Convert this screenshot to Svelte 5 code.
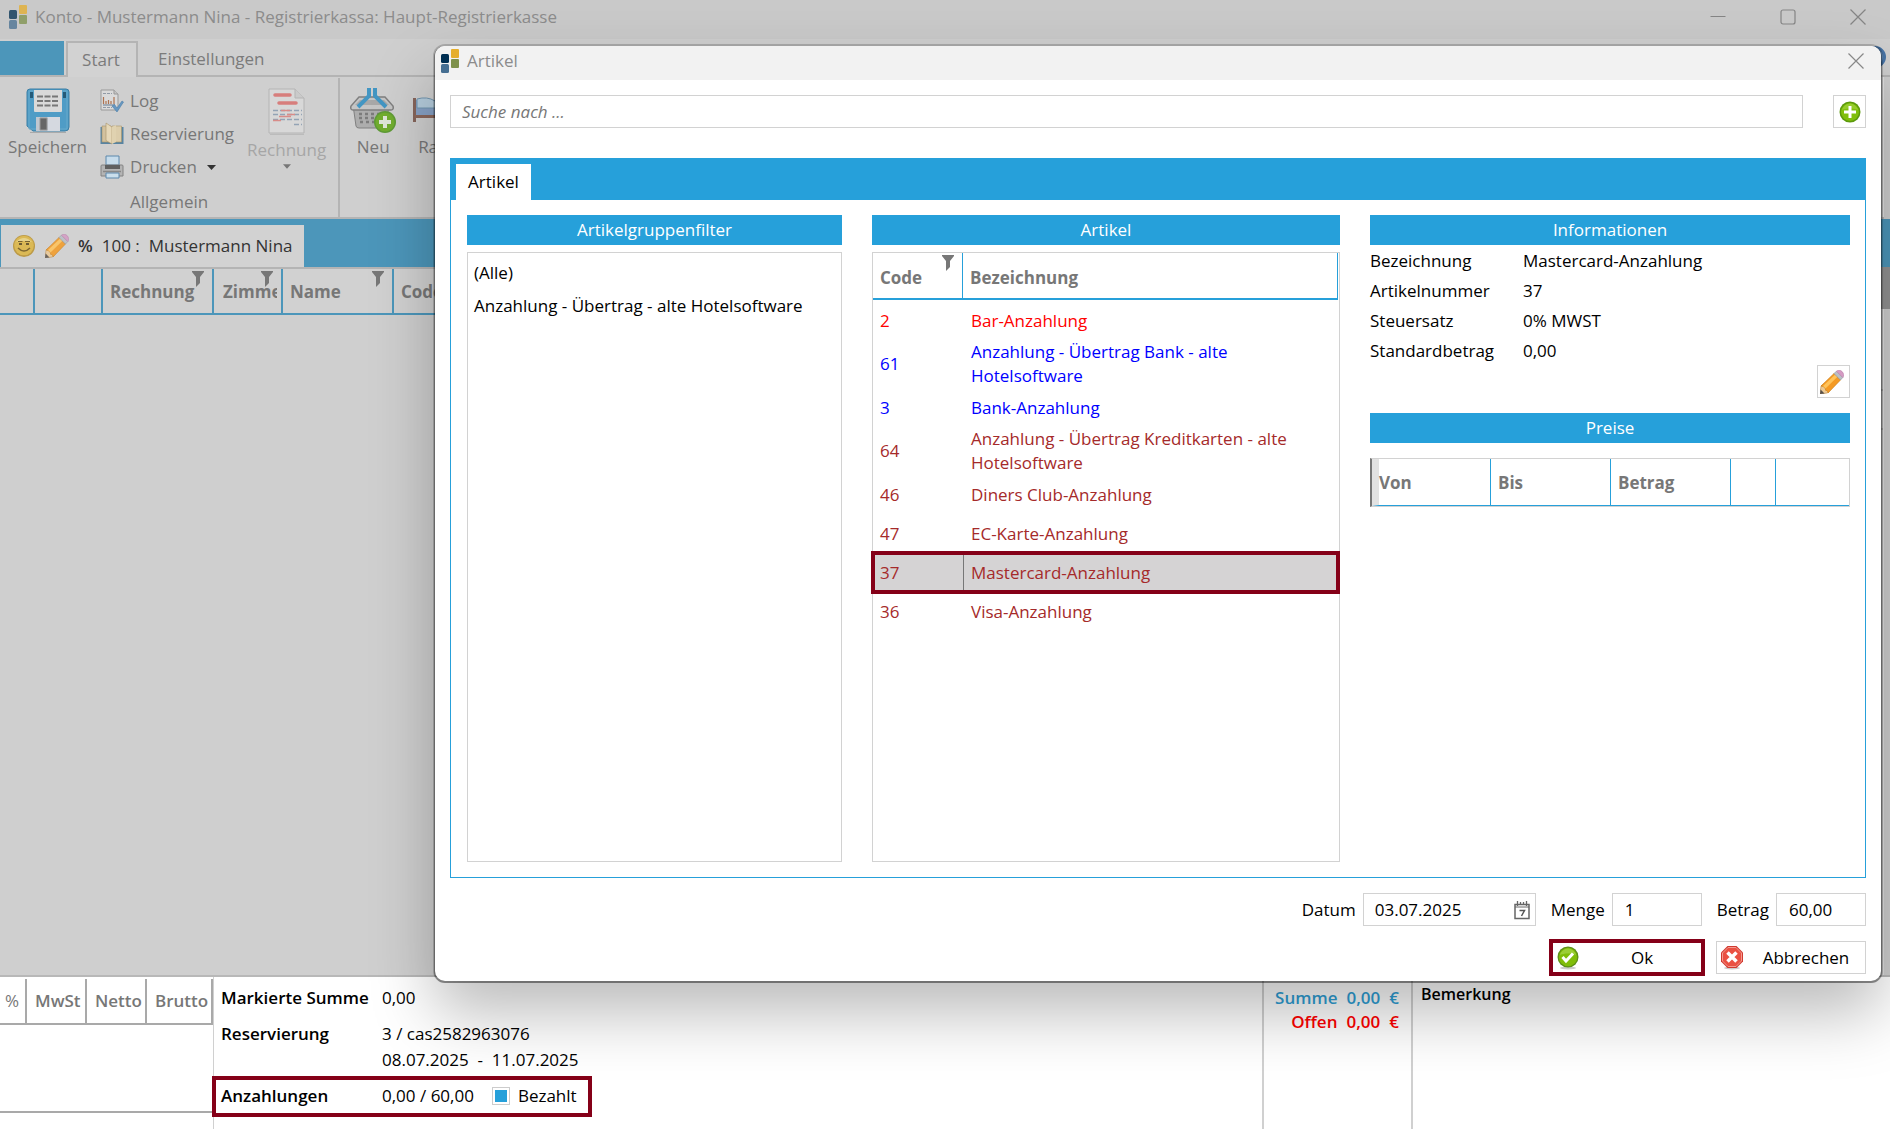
<script>
  const groups = ['(Alle)', 'Anzahlung - Übertrag - alte Hotelsoftware'];

  const articles = [
    {code: '2', name: 'Bar-Anzahlung', kind: 'cash'},
    {code: '61', name: 'Anzahlung - Übertrag Bank - alte Hotelsoftware', kind: 'bank'},
    {code: '3', name: 'Bank-Anzahlung', kind: 'bank'},
    {code: '64', name: 'Anzahlung - Übertrag Kreditkarten - alte Hotelsoftware', kind: 'card'},
    {code: '46', name: 'Diners Club-Anzahlung', kind: 'card'},
    {code: '47', name: 'EC-Karte-Anzahlung', kind: 'card'},
    {code: '37', name: 'Mastercard-Anzahlung', kind: 'card'},
    {code: '36', name: 'Visa-Anzahlung', kind: 'card'}
  ];

  let selectedCode = $state('37');
  let search = $state('');
  let date = $state('03.07.2025');
  let amount = $state('1');
  let price = $state('60,00');
  let paid = $state(true);

  let selected = $derived(articles.find((a) => a.code === selectedCode));
</script>

{#snippet logo()}
  <svg class="logo" width="18" height="24" viewBox="0 0 18 24" aria-hidden="true">
    <rect x="0" y="5" width="8" height="9" rx="1.5" fill="#002f52" />
    <rect x="0" y="15" width="8" height="9" rx="1.5" fill="#466f92" />
    <rect x="10" y="0" width="8" height="9" rx="1" fill="#e5ae2b" />
    <rect x="10" y="10" width="8" height="9" rx="1" fill="#7e914b" />
  </svg>
{/snippet}

{#snippet funnel()}
  <svg class="funnel" width="12" height="16" viewBox="0 0 12 16" aria-hidden="true">
    <path d="M0 0h12v1L8 6v6l-4 4V6L0 1z" fill="#777" />
  </svg>
{/snippet}

{#snippet cross()}
  <svg width="16" height="16" viewBox="0 0 16 16" aria-hidden="true">
    <path d="M.5.5l15 15M15.5.5l-15 15" fill="none" stroke="currentColor" stroke-width="1.2" />
  </svg>
{/snippet}

{#snippet pencil()}
  <svg width="24" height="24" viewBox="0 0 24 24" aria-hidden="true">
    <path d="M0 24l1-8 4-3 6 6-3.500 4z" fill="#ecc994" stroke="#b98a4d" stroke-width=".6" />
    <path d="M0 24l.6-4.500 3.900 3.900z" fill="#57504a" />
    <path d="M1 16L14 3.500l6.500 6.500L8 23c0-1.800-.8-2.600-2.300-2.600 0-2.200-1.700-4.200-4.700-4.400z" fill="#f49a24" stroke="#c87a14" stroke-width=".6" />
    <path d="M3 16L15.200 4.500l2.300 2.300L5.500 18.500z" fill="#ffc35a" />
    <path d="M14 3.500l2.500-2.300 6.300 6.300-2.300 2.500z" fill="#b9bfc6" stroke="#8b9299" stroke-width=".6" />
    <path d="M16.500 1.200c1.500-1.500 4-1.200 5.600.4s2.200 4.400.7 5.900z" fill="#d59bc4" stroke="#b77fa8" stroke-width=".6" />
  </svg>
{/snippet}

{#snippet plusBall(size)}
  <svg width={size} height={size} viewBox="0 0 22 22" aria-hidden="true">
    <circle cx="11" cy="11" r="10.500" fill="#5c9a0c" />
    <circle cx="11" cy="11" r="9" fill="#80be0b" />
    <path d="M3 9a8.200 8.200 0 0 1 16 0c-4-2-12-2-16 0z" fill="#a5d545" opacity=".6" />
    <path d="M9.500 5h3v4.500H17v3h-4.500V17h-3v-4.500H5v-3h4.500z" fill="#fff" />
  </svg>
{/snippet}

<div class="desktop">
  <div class="titlebar">
    {@render logo()}
    <span class="title">Konto - Mustermann Nina - Registrierkassa: Haupt-Registrierkasse</span>
    <div class="window-buttons">
      <button aria-label="Minimieren">
        <svg width="16" height="16" viewBox="0 0 16 16"><path d="M.5 7.500h15" stroke="currentColor" /></svg>
      </button>
      <button aria-label="Maximieren">
        <svg width="16" height="16" viewBox="0 0 16 16"><rect x="1" y="1" width="14" height="14" rx="2" fill="none" stroke="currentColor" stroke-width="1.200" /></svg>
      </button>
      <button aria-label="Fenster schließen">{@render cross()}</button>
    </div>
  </div>

  <div class="ribbon-tabs">
    <button class="file" aria-label="Datei"></button>
    <button class="ribbon-tab active">Start</button>
    <button class="ribbon-tab">Einstellungen</button>
    <button class="help" aria-label="Hilfe"></button>
  </div>

  <div class="ribbon">
    <div class="ribbon-group">
      <div class="tools">
        <button class="big">
          <svg width="44" height="46" viewBox="0 0 44 46" aria-hidden="true">
            <path d="M4 2h36q3 0 3 3v35q0 4-4 4H7L1 39V5q0-3 3-3z" fill="#4f9cc6" stroke="#3b7ea5" />
            <path d="M3 4h38v38H3z" fill="none" stroke="#69aacb" />
            <path d="M8 3h28v21q0 1-1 1H9q-1 0-1-1z" fill="#d9d9d9" />
            <path d="M4 5h3v6H4zM37 5h3v6h-3z" fill="#255a78" />
            <path d="M11 9.500h22M11 14h22M11 18.500h22" stroke="#777" stroke-width="1.800" stroke-dasharray="6 1.500" />
            <path d="M10 30h24v14H10z" fill="#c0c7d0" />
            <path d="M22 30h12v14H22z" fill="#d5d9e0" />
            <path d="M14 31h7v12h-7z" fill="#666" stroke="#999" />
            <path d="M4 45.500h36" stroke="#aaa" />
          </svg>
          <span>Speichern</span>
        </button>
        <div class="stack">
          <button class="small">
            <svg width="24" height="24" viewBox="0 0 24 24" aria-hidden="true">
              <path d="M1 1h13l4 4v16H1z" fill="#dadada" stroke="#999" />
              <path d="M14 1v4h4" fill="#c4c4c4" stroke="#999" />
              <path d="M3 4.500h9M3 18.500h9" stroke="#919aa6" stroke-dasharray="3 1" />
              <path d="M3.500 15V8M6 15v-3M8.500 15v-4M11 15v-3M14 15V8" stroke="#ae7351" stroke-width="1.200" />
              <path d="M3 16h12" stroke="#647a91" />
              <path d="M12 17l2.500-1.500 2.500 3.500 5-7 1.500 1L17 23z" fill="#6798c2" stroke="#4b7da8" stroke-width=".6" />
            </svg>
            <span>Log</span>
          </button>
          <button class="small">
            <svg width="24" height="24" viewBox="0 0 24 24" aria-hidden="true">
              <path d="M.5 5h23v17H.5z" fill="#5884a2" />
              <path d="M2 4h9v16H2z" fill="#d2c19e" stroke="#aa9369" stroke-width=".6" />
              <path d="M12 4h9.500v16H12z" fill="#dccdab" stroke="#aa9369" stroke-width=".6" />
              <path d="M6 1l6 4v17l-6-3.500z" fill="#e6d8b8" stroke="#aa9369" stroke-width=".6" />
              <path d="M12 5l4-2v17l-4 2z" fill="#e0d2b0" />
            </svg>
            <span>Reservierung</span>
          </button>
          <button class="small">
            <svg width="24" height="24" viewBox="0 0 24 24" aria-hidden="true">
              <path d="M6 1h13v9H6z" fill="#c7dceb" stroke="#5c88ac" />
              <path d="M1 11q0-1 1-1h20q1 0 1 1v10H1z" fill="#b4b4b4" stroke="#828282" />
              <path d="M5 10h15v4H5z" fill="#606060" />
              <path d="M3 16.500h18" stroke="#888" stroke-width="1.500" />
              <path d="M6 18h13v5H6z" fill="#cbdfec" stroke="#5c88ac" />
            </svg>
            <span>Drucken</span>
            <svg class="arrow" width="9" height="5" viewBox="0 0 9 5" aria-hidden="true"><path d="M0 0h9L4.500 5z" fill="#333" /></svg>
          </button>
        </div>
        <button class="big" disabled>
          <svg width="40" height="49" viewBox="0 0 40 49" aria-hidden="true">
            <path d="M2 2h26l9 9v35H2z" fill="#d8d8d8" stroke="#b4b4b4" />
            <path d="M28 2v9h9" fill="#cacaca" stroke="#b4b4b4" />
            <path d="M8 8h15M12 16h17" stroke="#d77e7c" stroke-width="3.500" stroke-linecap="round" />
            <path d="M6 23.500h29M6 27.500h29M6 32.500h29M27 37.500h8" stroke="#93a3b5" stroke-width="1.300" stroke-dasharray="5 2" />
            <path d="M14 23.500h9M20 27.500h8M12 29.500h12M6 33.500h8" stroke="#d88c89" stroke-width="1.600" />
            <path d="M3 47.500h34" stroke="#bbb" />
          </svg>
          <span>Rechnung</span>
          <svg width="8" height="5" viewBox="0 0 9 5" aria-hidden="true"><path d="M0 0h9L4.500 5z" fill="#777" /></svg>
        </button>
      </div>
      <div class="caption">Allgemein</div>
    </div>
    <div class="ribbon-group">
      <div class="tools">
        <button class="big">
          <svg width="46" height="46" viewBox="0 0 46 46" aria-hidden="true">
            <path d="M3 18h36l-3 21q-.4 2-3 2H9q-2.600 0-3-2z" fill="#adadad" stroke="#808080" />
            <path d="M9 10h26l8 9q1 4-2 4H3q-3 0-2-4z" fill="#c5c5c5" stroke="#7f7f7f" stroke-width="1.500" />
            <path d="M10 13h24l5 5H5z" fill="#a8a8a8" />
            <path d="M9 27h26M9 31h26M10 35h24" stroke="#7c7c7c" stroke-width="2.500" stroke-dasharray="3 3" />
            <path d="M19 1v8L8 20M25 1v8l11 11" fill="none" stroke="#4396c3" stroke-width="4" />
            <circle cx="35" cy="35" r="11" fill="#5f9b36" />
            <circle cx="35" cy="35" r="9.500" fill="#71ad2f" />
            <path d="M33 29h4v4h4v4h-4v4h-4v-4h-4v-4h4z" fill="#dfe6d8" />
          </svg>
          <span>Neu</span>
        </button>
        <button class="big room">
          <svg width="58" height="46" viewBox="0 0 58 46" aria-hidden="true">
            <path d="M1 11h3v24H1z" fill="#86655b" />
            <path d="M4 13h42l10 8v8H4z" fill="#87a1c5" />
            <path d="M5 12q10-3 18 2 5 4 0 7H5z" fill="#b5cddd" stroke="#7196b1" />
            <path d="M3 28h53v3H3z" fill="#8b675b" />
          </svg>
          <span>Raum</span>
        </button>
      </div>
    </div>
  </div>

  <div class="account-tabs">
    <button class="account-tab">
      <svg width="24" height="24" viewBox="0 0 24 24" aria-hidden="true">
        <circle cx="12" cy="12" r="11" fill="#b9912f" />
        <circle cx="12" cy="11.500" r="9.800" fill="#ddb540" />
        <path d="M4 8q8-8 16 0-8-2-16 0z" fill="#ead37e" />
        <path d="M6 7.500h4.500M13 7.500h5" stroke="#6b5216" stroke-width="1.200" />
        <path d="M7 9h3v2H7zM14 9h3v2h-3z" fill="#5b4717" />
        <path d="M6 14q6 6 12 0" fill="none" stroke="#6f5415" stroke-width="1.500" />
      </svg>
      {@render pencil()}
      <strong>%</strong>
      <span>100 :</span>
      <span>Mustermann Nina</span>
    </button>
  </div>

  <div class="workspace">
    <table class="bookings">
      <thead>
        <tr>
          <th class="c-mark"></th>
          <th class="c-flag"></th>
          <th class="c-bill"><span>Rechnung</span>{@render funnel()}</th>
          <th class="c-room"><span>Zimmer</span>{@render funnel()}</th>
          <th class="c-name"><span>Name</span>{@render funnel()}</th>
          <th><span>Code</span></th>
        </tr>
      </thead>
    </table>
    <div class="side">
      <div class="side-head"></div>
      <div class="side-body">
        <div class="side-rule"></div>
        <div class="side-rule near"></div>
      </div>
    </div>
  </div>

  <div class="summary">
    <div class="taxes">
      <table>
        <thead>
          <tr><th class="t-rate">%</th><th class="t-tax">MwSt</th><th class="t-tax">Netto</th><th>Brutto</th></tr>
        </thead>
      </table>
    </div>
    <div class="facts">
      <div class="fact"><strong>Markierte Summe</strong><span>0,00</span></div>
      <div class="fact"><strong>Reservierung</strong><span>3 / cas2582963076</span></div>
      <div class="fact period"><strong></strong><span>08.07.2025 &nbsp;-&nbsp; 11.07.2025</span></div>
      <div class="fact marked">
        <strong>Anzahlungen</strong>
        <span>0,00 / 60,00</span>
        <label><input type="checkbox" bind:checked={paid} />Bezahlt</label>
      </div>
    </div>
    <div class="totals">
      <div class="total sum"><span>Summe</span><span>0,00</span><span>€</span></div>
      <div class="total open"><span>Offen</span><span>0,00</span><span>€</span></div>
    </div>
    <div class="remark">Bemerkung</div>
  </div>

  <div class="dialog" role="dialog" aria-label="Artikel">
    <div class="dialog-title">
      {@render logo()}
      <span class="title">Artikel</span>
      <button aria-label="Schließen">{@render cross()}</button>
    </div>

    <div class="dialog-body">
      <div class="search-row">
        <input class="search" placeholder="Suche nach ..." aria-label="Suche" bind:value={search} />
        <button class="square" aria-label="Neuer Artikel">{@render plusBall(22)}</button>
      </div>

      <div class="panel">
        <div class="panel-tabs"><button>Artikel</button></div>
        <div class="columns">
          <section>
            <h2>Artikelgruppenfilter</h2>
            <ul class="box groups">
              {#each groups as group}
                <li>{group}</li>
              {/each}
            </ul>
          </section>

          <section>
            <h2>Artikel</h2>
            <div class="box">
              <table class="articles">
                <thead>
                  <tr><th class="code">Code{@render funnel()}</th><th>Bezeichnung</th></tr>
                </thead>
                <tbody>
                  {#each articles as article}
                    <tr
                      class={article.kind}
                      class:selected={article.code === selectedCode}
                      onclick={() => (selectedCode = article.code)}
                    >
                      <td>{article.code}</td>
                      <td>{article.name}</td>
                    </tr>
                  {/each}
                </tbody>
              </table>
            </div>
          </section>

          <section>
            <h2>Informationen</h2>
            <dl>
              <dt>Bezeichnung</dt><dd>{selected.name}</dd>
              <dt>Artikelnummer</dt><dd>{selected.code}</dd>
              <dt>Steuersatz</dt><dd>0% MWST</dd>
              <dt>Standardbetrag</dt><dd>0,00</dd>
            </dl>
            <button class="square edit" aria-label="Bearbeiten">{@render pencil()}</button>
            <h2>Preise</h2>
            <table class="prices">
              <thead>
                <tr><th class="p-from">Von</th><th class="p-col">Bis</th><th class="p-col">Betrag</th><th class="p-gap"></th><th></th></tr>
              </thead>
            </table>
          </section>
        </div>
      </div>

      <div class="fields">
        <label for="date">Datum</label>
        <div class="date">
          <input id="date" bind:value={date} />
          <button aria-label="Kalender">
            <svg width="16" height="20" viewBox="0 0 16 20" aria-hidden="true">
              <path d="M1 4.500h14v14H1z" fill="none" stroke="#666" stroke-width="1.500" />
              <path d="M1 7h14" stroke="#666" />
              <path d="M3.500 1v5M6.500 2v3M9.500 2v3M12.500 1v5" stroke="#666" stroke-width="1.300" />
              <path d="M5.500 10.500h5L7.500 16" fill="none" stroke="#555" stroke-width="1.500" />
            </svg>
          </button>
        </div>
        <label for="amount">Menge</label>
        <input id="amount" class="short" bind:value={amount} />
        <label for="price">Betrag</label>
        <input id="price" class="short" bind:value={price} />
      </div>

      <div class="actions">
        <button class="action ok">
          <svg width="22" height="24" viewBox="0 0 22 24" aria-hidden="true">
            <ellipse cx="11" cy="22" rx="8" ry="1.500" fill="#ccc" />
            <circle cx="11" cy="11" r="10.500" fill="#5d8f18" />
            <circle cx="11" cy="11" r="9.200" fill="#80bd09" />
            <path d="M3 9a8.200 8.200 0 0 1 16 0c-4-2-12-2-16 0z" fill="#a7d64b" opacity=".7" />
            <path d="M5.500 11l3.500 4 7-7.500" fill="none" stroke="#fff" stroke-width="3" />
          </svg>
          <span>Ok</span>
        </button>
        <button class="action">
          <svg width="22" height="24" viewBox="0 0 22 24" aria-hidden="true">
            <ellipse cx="11" cy="22" rx="8" ry="1.500" fill="#ccc" />
            <path d="M6.500 0h9L22 6.500v9L15.500 22h-9L0 15.500v-9z" fill="#d03a30" />
            <path d="M7 1.500h8L20.500 7v8L15 20.500H7L1.500 15V7z" fill="#ea5143" stroke="#f59a90" />
            <path d="M6.500 6.500l9 9M15.500 6.500l-9 9" stroke="#fff" stroke-width="3.500" />
          </svg>
          <span>Abbrechen</span>
        </button>
      </div>
    </div>
  </div>
</div>

<style>
  :global(body) {
    margin: 0;
    overflow: hidden;
  }

  .desktop {
    position: relative;
    display: flex;
    flex-direction: column;
    min-height: 100vh;
    overflow: hidden;
    background: #cfcfcf;
    color: #000;
    font: 17px/24px "Open Sans", "Noto Sans", sans-serif;
  }

  button, input {
    margin: 0;
    padding: 0;
    box-sizing: border-box;
    border: none;
    border-radius: 0;
    background: none;
    color: inherit;
    font: inherit;
  }

  svg {
    display: block;
    flex: none;
  }

  table {
    width: 100%;
    border-collapse: separate;
    border-spacing: 0;
    table-layout: fixed;
  }

  th, td {
    padding: 0 7px;
    box-sizing: border-box;
    text-align: left;
  }

  th {
    position: relative;
    color: #777;
  }

  .funnel {
    position: absolute;
    top: 2px;
    right: 8px;
  }

  .title {
    color: #8c8c8c;
  }

  /* main window */
  .titlebar {
    display: flex;
    align-items: center;
    gap: 8px;
    height: 39px;
    padding: 0 24px 6px 9px;
    box-sizing: border-box;
    background: #c9c9c9;
  }

  .titlebar .logo {
    opacity: .75;
  }

  .window-buttons {
    display: flex;
    gap: 54px;
    margin-left: auto;
    color: #858585;
  }

  .ribbon-tabs {
    display: flex;
    height: 38px;
    padding-top: 2px;
    box-sizing: border-box;
    border-bottom: 2px solid #b4b4b4;
  }

  .file {
    width: 64px;
    height: 34px;
    margin-right: 2px;
    background: #4c96ba;
  }

  .ribbon-tab {
    height: 36px;
    padding: 0 20px;
    color: #7b7b7b;
  }

  .ribbon-tab.active {
    width: 72px;
    padding: 0 2px 0 0;
    border: 2px solid #b4b4b4;
    border-bottom: none;
    background: #d2d2d2;
  }

  .help {
    width: 22px;
    height: 22px;
    margin: 5px 4px 0 auto;
    border: 3px solid #4673a5;
    border-radius: 50%;
    background: #6b96c4;
  }

  .ribbon {
    display: flex;
    height: 140px;
    margin-right: 6px;
    border-right: 1px solid #e2e2e2;
    box-shadow: 0 2px 0 #b4b4b4;
    color: #777;
  }

  .ribbon-group {
    display: flex;
    flex-direction: column;
    justify-content: space-between;
    margin-top: 1px;
    border-right: 2px solid #b4b4b4;
  }

  .ribbon-group:last-child {
    border: none;
  }

  .tools {
    display: flex;
    align-items: flex-start;
    padding: 9px 12px 0 8px;
  }

  .ribbon-group:last-child .tools {
    padding-left: 10px;
  }

  .big {
    display: flex;
    flex-direction: column;
    align-items: center;
    gap: 2px;
  }

  .big.room {
    margin-left: 16px;
  }

  .stack {
    display: flex;
    flex-direction: column;
    gap: 9px;
    margin: 2px 13px 0 13px;
  }

  .small {
    display: flex;
    align-items: center;
    gap: 6px;
    height: 24px;
  }

  .arrow {
    margin-left: 4px;
  }

  .big:disabled {
    color: #a6a6a6;
  }

  .caption {
    padding-bottom: 3px;
    text-align: center;
  }

  .account-tabs {
    display: flex;
    align-items: flex-end;
    height: 48px;
    margin-top: 2px;
    padding-left: 1px;
    background: #4c96ba;
  }

  .account-tab {
    display: flex;
    align-items: center;
    gap: 9px;
    height: 42px;
    padding: 0 11px;
    background: #d2d2d2;
    color: #333;
  }

  .account-tab svg {
    opacity: .85;
  }

  .workspace {
    display: flex;
    flex: 1;
  }

  .bookings {
    flex: 1;
    align-self: flex-start;
    border-top: 2px solid #b4b4b4;
  }

  .bookings th {
    height: 46px;
    padding-top: 2px;
    border-right: 2px solid #4c96ba;
    border-bottom: 2px solid #4c96ba;
    background: #d1d1d1;
  }

  .bookings th span {
    display: block;
    overflow: hidden;
    white-space: nowrap;
  }

  .bookings th:last-child {
    border-right: none;
  }

  .c-mark { width: 35px; }
  .c-flag { width: 68px; }
  .c-bill { width: 111px; }
  .c-room { width: 69px; }
  .c-name { width: 111px; }

  .bookings .c-room {
    padding: 2px 4px 0 9px;
  }

  .side {
    display: flex;
    flex-direction: column;
    width: 300px;
  }

  .side-head {
    height: 42px;
    background: #929292;
  }

  .side-body {
    flex: 1;
    margin-right: 6px;
    border-right: 1px solid #e0e0e0;
  }

  .side-rule {
    height: 80px;
    border-bottom: 2px solid #b0b0b0;
  }

  .side-rule.near {
    height: 37px;
  }

  .summary {
    display: flex;
    height: 152px;
    border-top: 2px solid #b8b8b8;
    background: #fff;
  }

  .taxes {
    width: 213px;
    height: 136px;
    padding-top: 2px;
    box-sizing: border-box;
    border-bottom: 2px solid #a9a9a9;
  }

  .taxes th {
    height: 46px;
    padding-left: 8px;
    padding-right: 0;
    border-right: 2px solid #a9a9a9;
    border-bottom: 2px solid #a9a9a9;
    font-weight: 600;
  }

  .taxes .t-rate {
    width: 27px;
    padding-left: 5px;
    font-weight: 400;
  }

  .t-tax { width: 60px; }

  .facts {
    flex: 1;
    padding: 9px 0 0 7px;
    border-left: 1px solid #d0d0d0;
  }

  .fact {
    display: grid;
    grid-template-columns: 153px auto auto;
    column-gap: 8px;
    justify-content: start;
    margin-bottom: 12px;
  }

  .fact.period {
    margin: -10px 0 8px;
  }

  strong {
    font-weight: 600;
  }

  .marked {
    width: fit-content;
    margin-left: -5px;
    padding: 4px 11px 5px 5px;
    outline: 4px solid #850018;
  }

  .marked label {
    display: flex;
    align-items: center;
    gap: 8px;
    margin-left: 10px;
  }

  input[type="checkbox"] {
    width: 18px;
    height: 18px;
    padding: 2px;
    border: 1px solid #ccc;
    appearance: none;
  }

  input[type="checkbox"]:checked {
    background: #26a0da content-box;
  }

  .totals {
    width: 149px;
    padding-top: 9px;
    box-sizing: border-box;
    border-left: 2px solid #d0d0d0;
    font-weight: 600;
  }

  .total {
    display: flex;
    justify-content: flex-end;
    gap: 9px;
    padding-right: 12px;
  }

  .sum { color: #2f9fd6; }
  .open { color: #f00; }

  .remark {
    width: 479px;
    padding: 5px 0 0 8px;
    box-sizing: border-box;
    border-left: 2px solid #d0d0d0;
    font-size: 16px;
    font-weight: 600;
  }

  /* article dialog */
  .dialog {
    position: absolute;
    top: 46px;
    right: 9px;
    bottom: 148px;
    left: 435px;
    display: flex;
    flex-direction: column;
    border-radius: 10px;
    background: #fff;
    box-shadow: 0 0 0 2px rgba(0, 0, 0, .18), 0 1px 0 1px rgba(0, 0, 0, .3), 0 32px 64px rgba(0, 0, 0, .27);
  }

  .dialog-title {
    display: flex;
    align-items: center;
    gap: 8px;
    height: 34px;
    padding: 0 17px 4px 6px;
    box-sizing: border-box;
    border-radius: 10px 10px 0 0;
    background: #f2f2f2;
    color: #888;
  }

  .dialog-title button {
    margin-left: auto;
  }

  .dialog-body {
    display: flex;
    flex: 1;
    flex-direction: column;
    padding: 15px 15px 5px;
  }

  .search-row {
    display: flex;
    gap: 30px;
  }

  .search-row input {
    flex: 1;
    min-width: 0;
    height: 33px;
    padding: 0 11px;
    border: 1px solid #d2d2d2;
  }

  .search::placeholder {
    color: #777;
    font-style: italic;
    opacity: 1;
  }

  .square {
    display: flex;
    align-items: center;
    justify-content: center;
    width: 33px;
    height: 33px;
    border: 1px solid #d2d2d2;
  }

  .panel {
    display: flex;
    flex: 1;
    flex-direction: column;
    margin-top: 30px;
    border: 1px solid #26a0da;
    border-top: none;
  }

  .panel-tabs {
    padding: 6px 0 0 5px;
    background: #26a0da;
  }

  .panel-tabs button {
    display: block;
    width: 75px;
    height: 36px;
    background: #fff;
  }

  .columns {
    display: grid;
    flex: 1;
    grid-template-columns: 375fr 468fr 480fr;
    gap: 30px;
    padding: 15px 15px 15px 16px;
  }

  section {
    display: flex;
    flex-direction: column;
    min-width: 0;
  }

  h2 {
    height: 30px;
    margin: 0;
    background: #26a0da;
    color: #fff;
    font: inherit;
    line-height: 30px;
    text-align: center;
  }

  .box {
    flex: 1;
    margin: 7px 0 0;
    padding-right: 1px;
    border: 1px solid #d2d2d2;
  }

  .groups {
    padding: 3px 6px;
    list-style: none;
  }

  .groups li {
    line-height: 33px;
  }

  .articles th {
    height: 47px;
    padding-top: 4px;
    border-right: 1px solid #26a0da;
    border-bottom: 2px solid #26a0da;
  }

  .articles .code {
    width: 90px;
  }

  .articles tbody::before {
    content: "";
    display: block;
    height: 1px;
  }

  .articles td {
    height: 39px;
  }

  .articles td:last-child {
    padding-left: 8px;
  }

  .cash { color: #f00; }
  .bank { color: #00f; }
  .card { color: #a52a2a; }

  .selected {
    outline: 4px solid #850018;
    outline-offset: -2px;
    background: #d5d3d4;
  }

  .articles .selected td:last-child {
    box-shadow: inset 1px 0 0 #777;
  }

  dl {
    display: grid;
    grid-template-columns: 153px 1fr;
    margin: 1px 0 0;
    line-height: 30px;
  }

  dd {
    margin: 0;
  }

  .edit {
    align-self: flex-end;
    margin: -1px 0 15px;
  }

  .edit svg {
    margin-right: 4px;
  }

  .prices {
    margin-top: 15px;
    border: 1px solid #d2d2d2;
    border-left: 2px solid #777;
  }

  .prices th {
    height: 47px;
    padding-top: 2px;
    border-right: 1px solid #26a0da;
    border-bottom: 1px solid #26a0da;
  }

  .prices th:last-child {
    border-right: none;
  }

  .prices .p-from {
    width: 119px;
    padding-left: 0;
    border-left: 7px solid #e2e2e2;
  }

  .p-col { width: 120px; }
  .p-gap { width: 45px; }

  .fields, .actions {
    display: flex;
    align-items: center;
    justify-content: flex-end;
  }

  .fields {
    gap: 7px;
    margin-top: 15px;
  }

  .fields label:not(:first-child) {
    margin-left: 8px;
  }

  .date {
    display: flex;
    align-items: center;
    width: 173px;
    height: 33px;
    padding: 0 5px 0 11px;
    box-sizing: border-box;
    border: 1px solid #d2d2d2;
  }

  .date input {
    flex: 1;
    min-width: 0;
  }

  .short {
    width: 90px;
    height: 33px;
    padding: 0 12px;
    border: 1px solid #d2d2d2;
  }

  .actions {
    gap: 11px;
    margin-top: 13px;
  }

  .action {
    display: flex;
    align-items: center;
    width: 150px;
    height: 33px;
    padding: 0 0 0 4px;
    border: 1px solid #d2d2d2;
  }

  .action span {
    flex: 1;
    padding-left: 4px;
    text-align: center;
  }

  .action.ok {
    width: 156px;
    height: 37px;
    border: 4px solid #850018;
  }
</style>
